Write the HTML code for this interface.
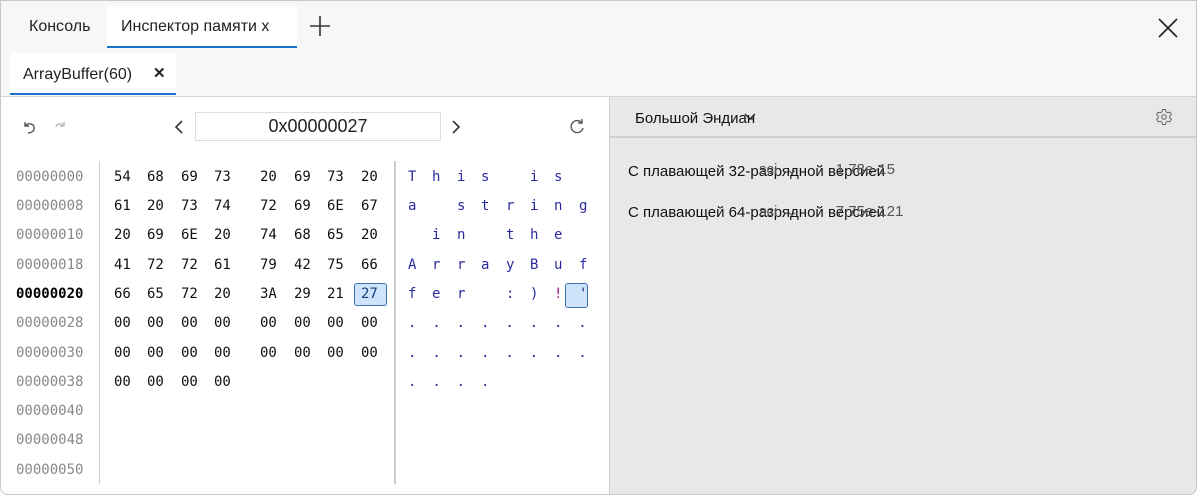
<!DOCTYPE html><html><head><meta charset="utf-8"><style>
*{margin:0;padding:0;box-sizing:border-box}
body{width:1200px;height:499px;background:#fff;font-family:"Liberation Sans",sans-serif;position:relative;overflow:hidden}
.frame{position:absolute;left:0;top:0;width:1197px;height:495px;border:1px solid #c8c8c8;border-radius:0 0 8px 8px;overflow:hidden;background:#f7f7f7}
.t{position:absolute;font-size:16px;color:#222}
.mono{font-family:"DejaVu Sans Mono","Liberation Mono",monospace;font-size:14px;position:absolute}
.row{position:absolute;height:20px;line-height:20px}
.c{position:absolute}
</style></head><body><div class="frame">
<div class="t" style="left:28px;top:17px">Консоль</div>
<div style="position:absolute;left:106px;top:5px;width:190px;height:42px;background:#fff;border-bottom:2px solid #1a73c8"></div>
<div class="t" style="left:120px;top:17px">Инспектор памяти x</div>
<svg style="position:absolute;left:307px;top:13px" width="24" height="24"><path d="M12 2v20M2 12h20" stroke="#333" stroke-width="1.6"/></svg>
<svg style="position:absolute;left:1156px;top:16px" width="22" height="22"><path d="M2 2l18 18M20 2L2 20" stroke="#222" stroke-width="1.6"/></svg>
<div style="position:absolute;left:9px;top:52px;width:166px;height:42px;background:#fff;border-bottom:2px solid #1a73c8"></div>
<div class="t" style="left:22px;top:65px">ArrayBuffer(60)</div>
<div class="t" style="left:152px;top:63px;font-weight:bold;font-size:15px">✕</div>
<div style="position:absolute;left:0;top:95px;width:1197px;height:1px;background:#d4d4d4"></div>
<div style="position:absolute;left:0;top:96px;width:608px;height:400px;background:#fff"></div>
<div style="position:absolute;left:608px;top:96px;width:1px;height:400px;background:#d0d0d0"></div>
<div style="position:absolute;left:609px;top:96px;width:588px;height:400px;background:#e8e8e8"></div>
<div style="position:absolute;left:609px;top:135px;width:588px;height:2px;background:#cfcfcf"></div>
<svg style="position:absolute;left:20px;top:118px" width="16" height="16"><path d="M4 3v4h4M4 7c2-3 8-3 9 1s-3 6-6 6" fill="none" stroke="#555" stroke-width="1.4"/></svg>
<svg style="position:absolute;left:52px;top:118px" width="14" height="16"><path d="M11 3v4H7M11 7C9 4 4 4 3 8" fill="none" stroke="#bbb" stroke-width="1.4"/></svg>
<svg style="position:absolute;left:172px;top:118px" width="12" height="16"><path d="M9 2L3 8l6 6" fill="none" stroke="#333" stroke-width="1.6"/></svg>
<div style="position:absolute;left:194px;top:111px;width:246px;height:29px;border:1px solid #ddd;background:#fff;text-align:center;line-height:27px;font-size:18px;color:#222">0x00000027</div>
<svg style="position:absolute;left:449px;top:118px" width="12" height="16"><path d="M3 2l6 6-6 6" fill="none" stroke="#333" stroke-width="1.6"/></svg>
<svg style="position:absolute;left:567px;top:117px" width="18" height="18"><path d="M14 5A6 6 0 1 0 15 10M14 1v4h-4" fill="none" stroke="#555" stroke-width="1.4"/></svg>
<div style="position:absolute;left:98px;top:160px;width:1px;height:323px;background:#ccc"></div>
<div style="position:absolute;left:393px;top:160px;width:2px;height:323px;background:#ccc"></div>
<div id="g"></div>
<div class="t" style="left:634px;top:109px;font-size:15px;color:#111">Большой Эндиан</div>
<svg style="position:absolute;left:742px;top:111px" width="14" height="10"><path d="M2 2l5 5 5-5" fill="none" stroke="#222" stroke-width="1.4"/></svg>
<svg style="position:absolute;left:1154px;top:107px" width="18" height="18" viewBox="0 0 24 24"><circle cx="12" cy="12" r="3" fill="none" stroke="#666" stroke-width="1.4"/><path d="M10 2h4l.6 3 2.4 1.4 2.9-1 2 3.4-2.3 2v2.4l2.3 2-2 3.4-2.9-1-2.4 1.4-.6 3h-4l-.6-3-2.4-1.4-2.9 1-2-3.4 2.3-2V11l-2.3-2 2-3.4 2.9 1L9.4 5z" fill="none" stroke="#666" stroke-width="1.3"/></svg>
<div class="t" style="left:627px;top:162px;font-size:15px;color:#111">С плавающей 32-разрядной версией</div>
<div class="t" style="left:758px;top:159px;font-size:15px;color:#555">sci &nbsp;⌄ &nbsp; &nbsp; &nbsp; &nbsp; 1.78e-15</div>
<div class="t" style="left:627px;top:203px;font-size:15px;color:#111">С плавающей 64-разрядной версией</div>
<div class="t" style="left:758px;top:201px;font-size:15px;color:#555">sci &nbsp;⌄ &nbsp; &nbsp; &nbsp; &nbsp; 7.75e-121</div>

<div class="mono" style="left:0;top:0;width:608px">
<div class="row" style="top:166px;left:15px;color:#888">00000000</div>
<div class="row" style="top:195px;left:15px;color:#888">00000008</div>
<div class="row" style="top:224px;left:15px;color:#888">00000010</div>
<div class="row" style="top:254px;left:15px;color:#888">00000018</div>
<div class="row" style="top:283px;left:15px;color:#000;font-weight:bold">00000020</div>
<div class="row" style="top:312px;left:15px;color:#888">00000028</div>
<div class="row" style="top:342px;left:15px;color:#888">00000030</div>
<div class="row" style="top:371px;left:15px;color:#888">00000038</div>
<div class="row" style="top:400px;left:15px;color:#888">00000040</div>
<div class="row" style="top:429px;left:15px;color:#888">00000048</div>
<div class="row" style="top:459px;left:15px;color:#888">00000050</div>
</div>
<div style="position:absolute;left:353px;top:282px;width:33px;height:23px;border:1px solid #3b6fb0;border-radius:3px;background:#cfe4fb"></div>
<div style="position:absolute;left:564px;top:282px;width:23px;height:25px;border:1px solid #3b6fb0;border-radius:3px;background:#cfe4fb"></div>
<div class="mono" style="left:0;top:0;color:#111">
<div class="row" style="top:166px;left:113px;word-spacing:0"><span class="c" style="left:0">54</span><span class="c" style="left:33px">68</span><span class="c" style="left:67px">69</span><span class="c" style="left:100px">73</span><span class="c" style="left:146px">20</span><span class="c" style="left:180px">69</span><span class="c" style="left:213px">73</span><span class="c" style="left:247px">20</span></div>
<div class="row" style="top:195px;left:113px"><span class="c" style="left:0">61</span><span class="c" style="left:33px">20</span><span class="c" style="left:67px">73</span><span class="c" style="left:100px">74</span><span class="c" style="left:146px">72</span><span class="c" style="left:180px">69</span><span class="c" style="left:213px">6E</span><span class="c" style="left:247px">67</span></div>
<div class="row" style="top:224px;left:113px"><span class="c" style="left:0">20</span><span class="c" style="left:33px">69</span><span class="c" style="left:67px">6E</span><span class="c" style="left:100px">20</span><span class="c" style="left:146px">74</span><span class="c" style="left:180px">68</span><span class="c" style="left:213px">65</span><span class="c" style="left:247px">20</span></div>
<div class="row" style="top:254px;left:113px"><span class="c" style="left:0">41</span><span class="c" style="left:33px">72</span><span class="c" style="left:67px">72</span><span class="c" style="left:100px">61</span><span class="c" style="left:146px">79</span><span class="c" style="left:180px">42</span><span class="c" style="left:213px">75</span><span class="c" style="left:247px">66</span></div>
<div class="row" style="top:283px;left:113px"><span class="c" style="left:0">66</span><span class="c" style="left:33px">65</span><span class="c" style="left:67px">72</span><span class="c" style="left:100px">20</span><span class="c" style="left:146px">3A</span><span class="c" style="left:180px">29</span><span class="c" style="left:213px">21</span><span class="c" style="left:247px;color:#1a3d80">27</span></div>
<div class="row" style="top:312px;left:113px"><span class="c" style="left:0">00</span><span class="c" style="left:33px">00</span><span class="c" style="left:67px">00</span><span class="c" style="left:100px">00</span><span class="c" style="left:146px">00</span><span class="c" style="left:180px">00</span><span class="c" style="left:213px">00</span><span class="c" style="left:247px">00</span></div>
<div class="row" style="top:342px;left:113px"><span class="c" style="left:0">00</span><span class="c" style="left:33px">00</span><span class="c" style="left:67px">00</span><span class="c" style="left:100px">00</span><span class="c" style="left:146px">00</span><span class="c" style="left:180px">00</span><span class="c" style="left:213px">00</span><span class="c" style="left:247px">00</span></div>
<div class="row" style="top:371px;left:113px"><span class="c" style="left:0">00</span><span class="c" style="left:33px">00</span><span class="c" style="left:67px">00</span><span class="c" style="left:100px">00</span></div>
</div>
<div class="mono" style="left:407px;top:0;color:#2a2aa0">
<div class="row" style="top:166px;left:0"><span class="c" style="left:0">T</span><span class="c" style="left:24px">h</span><span class="c" style="left:49px">i</span><span class="c" style="left:73px">s</span><span class="c" style="left:122px">i</span><span class="c" style="left:146px">s</span></div>
<div class="row" style="top:195px;left:0"><span class="c" style="left:0">a</span><span class="c" style="left:49px">s</span><span class="c" style="left:73px">t</span><span class="c" style="left:98px">r</span><span class="c" style="left:122px">i</span><span class="c" style="left:146px">n</span><span class="c" style="left:171px">g</span></div>
<div class="row" style="top:224px;left:0"><span class="c" style="left:24px">i</span><span class="c" style="left:49px">n</span><span class="c" style="left:98px">t</span><span class="c" style="left:122px">h</span><span class="c" style="left:146px">e</span></div>
<div class="row" style="top:254px;left:0"><span class="c" style="left:0">A</span><span class="c" style="left:24px">r</span><span class="c" style="left:49px">r</span><span class="c" style="left:73px">a</span><span class="c" style="left:98px">y</span><span class="c" style="left:122px">B</span><span class="c" style="left:146px">u</span><span class="c" style="left:171px">f</span></div>
<div class="row" style="top:283px;left:0"><span class="c" style="left:0">f</span><span class="c" style="left:24px">e</span><span class="c" style="left:49px">r</span><span class="c" style="left:98px">:</span><span class="c" style="left:122px">)</span><span class="c" style="left:146px;color:#a0208a">!</span><span class="c" style="left:171px;color:#1a3d80">'</span></div>
<div class="row" style="top:312px;left:0;letter-spacing:15.9px">........</div>
<div class="row" style="top:342px;left:0;letter-spacing:15.9px">........</div>
<div class="row" style="top:371px;left:0;letter-spacing:15.9px">....</div>
</div>
</div></body></html>
